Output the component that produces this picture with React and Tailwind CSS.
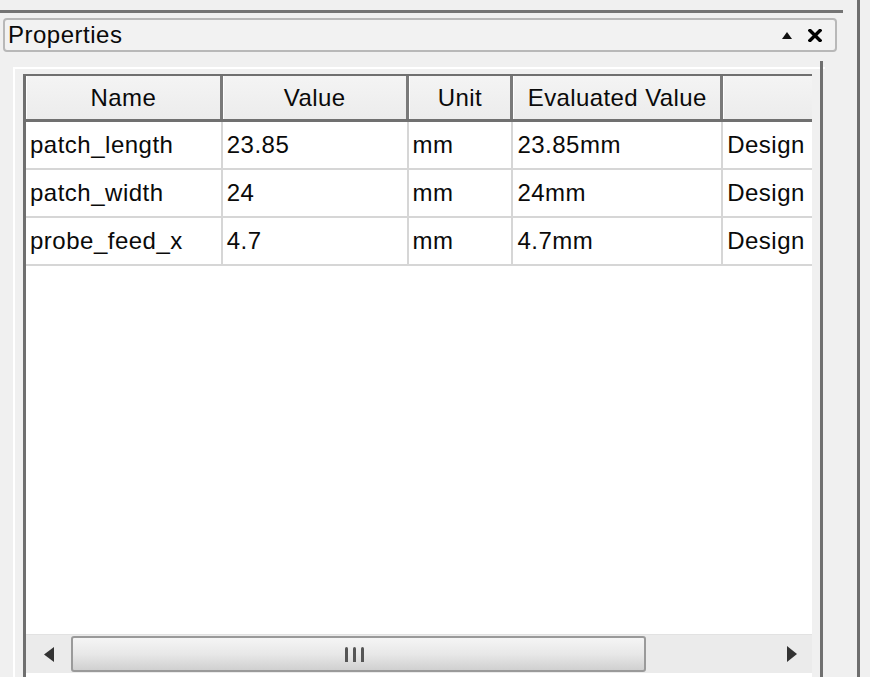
import React from "react";

const rows = [
  ["patch_length", "23.85", "mm", "23.85mm", "Design"],
  ["patch_width", "24", "mm", "24mm", "Design"],
  ["probe_feed_x", "4.7", "mm", "4.7mm", "Design"],
];

const widths = ["w-[197px]", "w-[186px]", "w-[105px]", "w-[210px]", "w-[89px]"];

export default function App() {
  return (
    <div
      className="w-[870px] h-[677px] bg-[#f0f0f0] flex overflow-hidden text-[#0a0a0a]"
      style={{ fontFamily: '"Liberation Sans", Arial, sans-serif' }}
    >
      {/* main column */}
      <div className="w-[857px] flex flex-col">
        <div className="h-[10px]" />
        <div className="h-[3px] w-[843px] bg-[#747474]" />
        <div className="h-[5px]" />
        {/* title bar */}
        <div className="ml-[3px] w-[834px] h-[34px] rounded-[4px] border-2 border-[#b8b8b8] bg-[#f2f2f2] flex items-center pl-[3px] pr-[13px]">
          <span className="text-[24px] leading-none tracking-[0.5px] -mt-[1px]">Properties</span>
          <div className="ml-auto flex items-center gap-[16px]">
            <svg width="10" height="7" viewBox="0 0 10 7">
              <polygon points="5,0 10,7 0,7" fill="#111" />
            </svg>
            <svg width="14" height="13" viewBox="0 0 14 13">
              <path d="M2 1.5 L12 11.5 M12 1.5 L2 11.5" stroke="#000" strokeWidth="3.4" strokeLinecap="square" />
            </svg>
          </div>
        </div>
        {/* content panel */}
        <div className="flex-1 flex mt-[11px]">
          <div className="w-[13px] shrink-0" />
          <div className="w-[812px] shrink-0 flex flex-col border-l-2 border-t-2 border-white mt-[4px]">
            <div className="flex-1 flex">
              <div className="w-[8px] shrink-0" />
              {/* list view */}
              <div className="w-[789px] shrink-0 flex flex-col mt-[5px] border-l-[3px] border-t-[2px] border-[#6f6f6f] bg-white">
                {/* header */}
                <div className="flex h-[46px] border-b-[3px] border-[#707070] bg-gradient-to-b from-[#f4f4f4] to-[#ececec]">
                  {["Name", "Value", "Unit", "Evaluated Value", ""].map((h, i) => (
                    <div
                      key={i}
                      className={`${widths[i]} h-full flex items-center justify-center text-[24px] leading-none tracking-[0.4px] ${
                        i < 4 ? "border-r-[3px] border-[#7a7a7a]" : ""
                      } border-l border-l-white`}
                    >
                      {h}
                    </div>
                  ))}
                </div>
                {rows.map((r, ri) => (
                  <div key={ri} className="flex h-[48px] border-b-2 border-[#d6d6d6]">
                    {r.map((c, ci) => (
                      <div
                        key={ci}
                        className={`${widths[ci]} h-full flex items-center pl-[4px] text-[24px] leading-none tracking-[0.5px] whitespace-nowrap overflow-hidden ${
                          ci < 4 ? "border-r-2 border-[#d6d6d6]" : ""
                        }`}
                      >
                        {c}
                      </div>
                    ))}
                  </div>
                ))}
                <div className="flex-1" />
                {/* horizontal scrollbar */}
                <div className="h-[39px] mb-[4px] flex items-center bg-[#ebebeb] border-t border-[#e2e2e2]">
                  <div className="w-[45px] h-full flex items-center justify-center">
                    <svg width="10" height="15" viewBox="0 0 10 15">
                      <polygon points="10,0 0,7.5 10,15" fill="#333" />
                    </svg>
                  </div>
                  <div className="w-[575px] h-[36px] rounded-[3px] border-2 border-[#9a9a9a] bg-gradient-to-b from-[#f5f5f5] via-[#e8e8e8] to-[#d0d0d0] flex items-center justify-center">
                    <div className="flex gap-[5px] -ml-[8px]">
                      <div className="w-[3px] h-[15px] bg-[#555] rounded-t-full" />
                      <div className="w-[3px] h-[15px] bg-[#555] rounded-t-full" />
                      <div className="w-[3px] h-[15px] bg-[#555] rounded-t-full" />
                    </div>
                  </div>
                  <div className="flex-1 h-full flex items-center justify-end pr-[15px]">
                    <svg width="10" height="16" viewBox="0 0 10 16">
                      <polygon points="0,0 10,8 0,16" fill="#333" />
                    </svg>
                  </div>
                </div>
              </div>
              <div className="w-[8px] shrink-0" />
              <div className="w-[3px] shrink-0 bg-[#707070] -mt-[8px]" />
            </div>
          </div>
        </div>
      </div>
      <div className="w-[3px] bg-[#6e6e6e]" />
      <div className="flex-1" />
    </div>
  );
}
